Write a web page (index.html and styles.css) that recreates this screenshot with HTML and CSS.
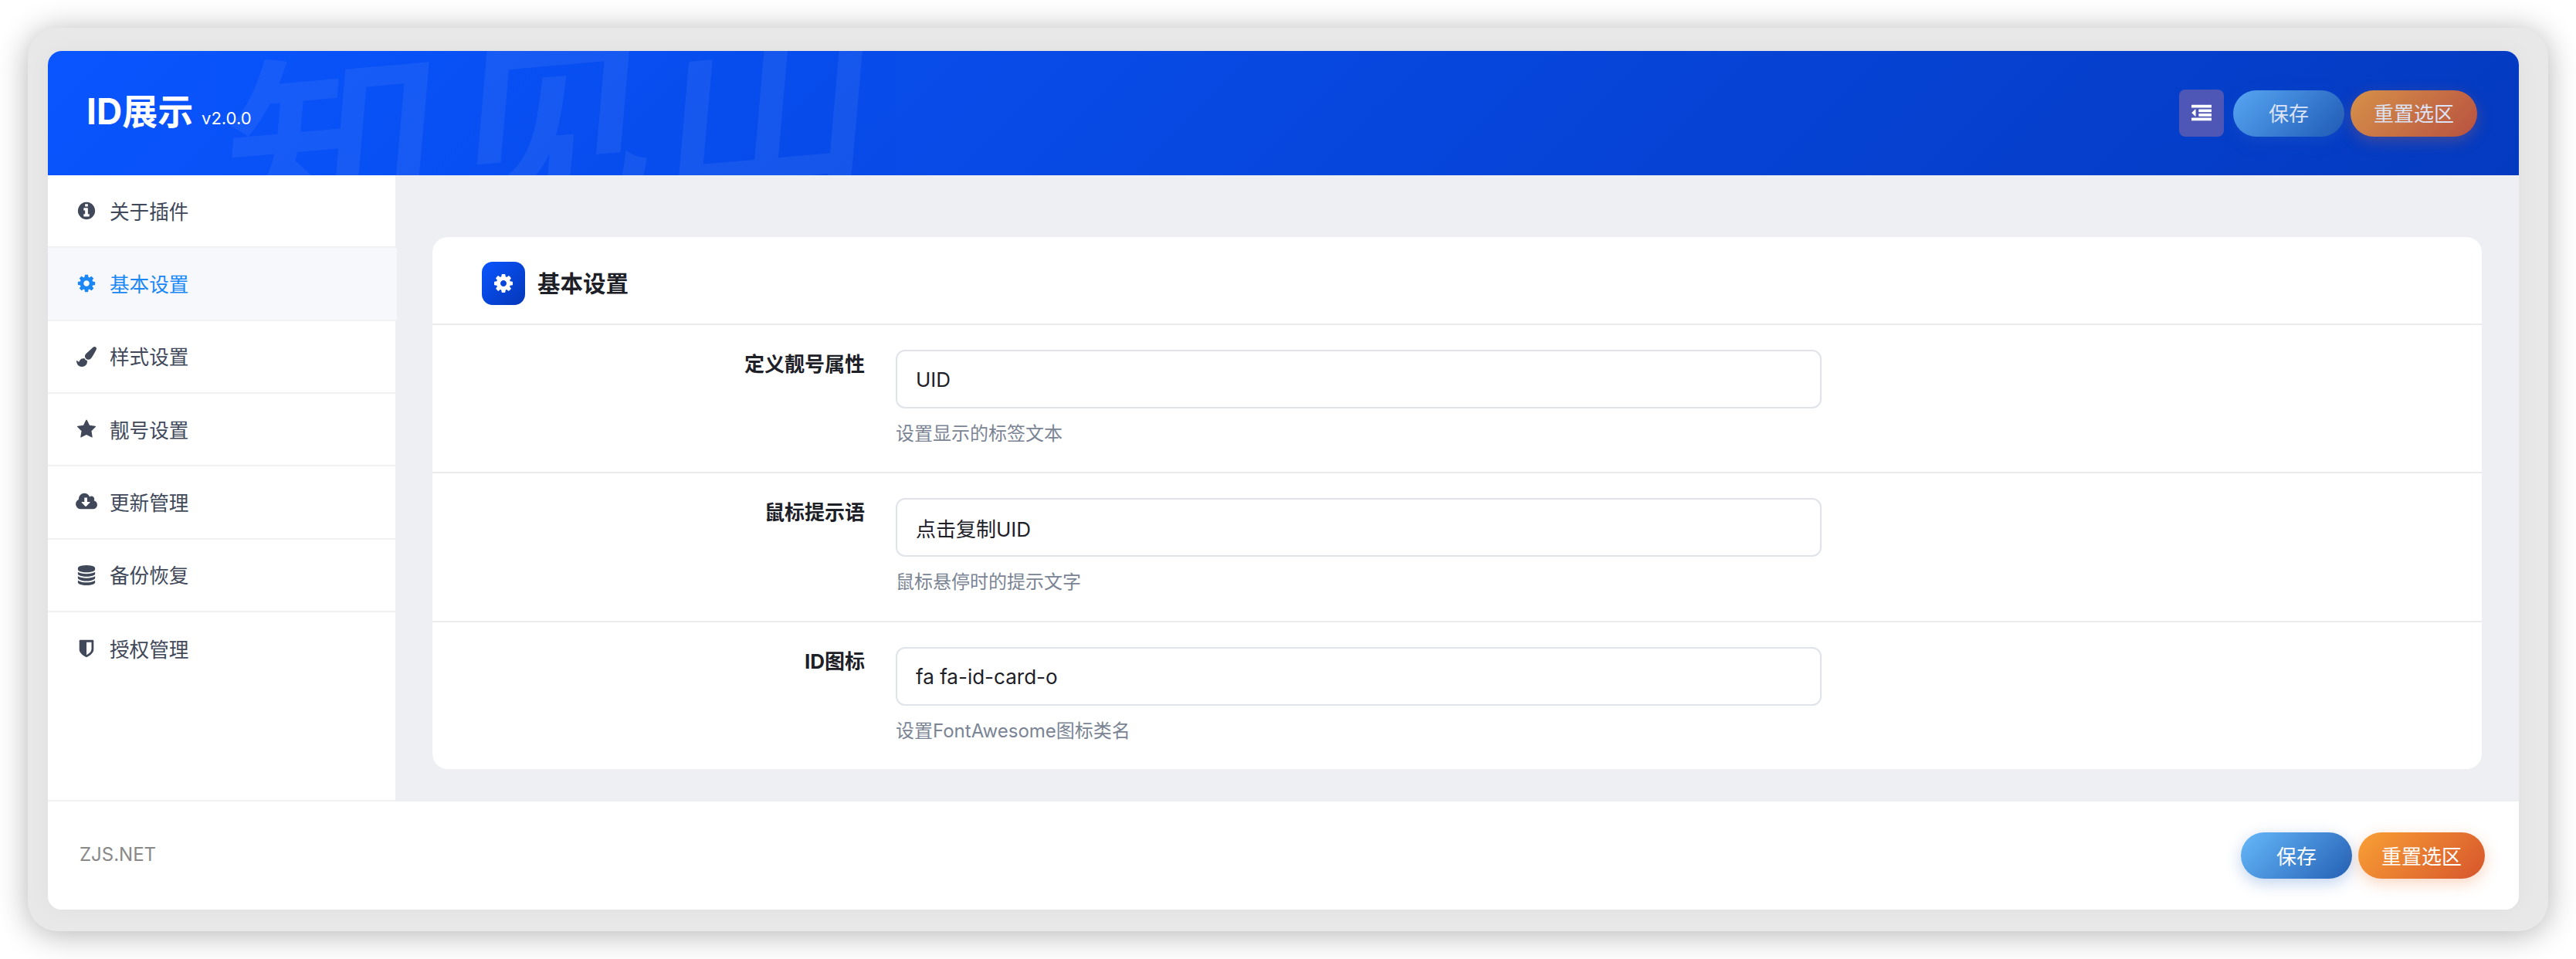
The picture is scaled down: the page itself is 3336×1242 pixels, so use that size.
FILE: index.html
```html
<!DOCTYPE html>
<html lang="zh-CN">
<head>
  <meta charset="UTF-8">
  <meta name="viewport" content="width=device-width, initial-scale=1.0">
  <title>ID展示</title>
  <link rel="stylesheet" href="styles.css">
</head>
<body>
  <div class="frame">
    <div class="panel">
      <header class="header">
        <div class="watermark">知见山</div>
        <h1 class="title">ID展示 <small class="version">v2.0.0</small></h1>
        <div class="header-actions">
          <button class="menu-btn" type="button">
            <svg class="menu-icon" viewBox="0 0 1792 1792"><path d="M384 544v576q0 13-9.5 22.5t-22.5 9.5q-14 0-23-9l-288-288q-9-9-9-23t9-23l288-288q9-9 23-9 13 0 22.5 9.5t9.5 22.5zm1408 768v192q0 13-9.5 22.5t-22.5 9.5h-1728q-13 0-22.5-9.5t-9.5-22.5v-192q0-13 9.5-22.5t22.5-9.5h1728q13 0 22.5 9.5t9.5 22.5zm0-384v192q0 13-9.5 22.5t-22.5 9.5h-1088q-13 0-22.5-9.5t-9.5-22.5v-192q0-13 9.5-22.5t22.5-9.5h1088q13 0 22.5 9.5t9.5 22.5zm0-384v192q0 13-9.5 22.5t-22.5 9.5h-1088q-13 0-22.5-9.5t-9.5-22.5v-192q0-13 9.5-22.5t22.5-9.5h1088q13 0 22.5 9.5t9.5 22.5zm0-384v192q0 13-9.5 22.5t-22.5 9.5h-1728q-13 0-22.5-9.5t-9.5-22.5v-192q0-13 9.5-22.5t22.5-9.5h1728q13 0 22.5 9.5t9.5 22.5z"/></svg>
          </button>
          <button class="btn btn-save btn-dim" type="button">保存</button>
          <button class="btn btn-reset btn-dim" type="button">重置选区</button>
        </div>
      </header>

      <div class="content">
        <nav class="sidebar">
          <a class="nav-item">
            <svg class="nav-icon" viewBox="0 0 1792 1792"><path d="M1152 1376v-160q0-14-9-23t-23-9h-96v-512q0-14-9-23t-23-9h-320q-14 0-23 9t-9 23v160q0 14 9 23t23 9h96v320h-96q-14 0-23 9t-9 23v160q0 14 9 23t23 9h448q14 0 23-9t9-23zm-128-896v-160q0-14-9-23t-23-9h-192q-14 0-23 9t-9 23v160q0 14 9 23t23 9h192q14 0 23-9t9-23zm640 416q0 209-103 385.5t-279.5 279.5-385.5 103-385.5-103-279.5-279.5-103-385.5 103-385.5 279.5-279.5 385.5-103 385.5 103 279.5 279.5 103 385.5z"/></svg>
            关于插件
          </a>
          <a class="nav-item active">
            <svg class="nav-icon" viewBox="0 0 1792 1792"><path d="M1152 896q0-106-75-181t-181-75-181 75-75 181 75 181 181 75 181-75 75-181zm512-109v222q0 12-8 23t-20 13l-185 28q-19 54-39 91 35 50 107 138 10 12 10 25t-9 23q-27 37-99 108t-94 71q-12 0-26-9l-138-108q-44 23-91 38-16 136-29 186-7 28-36 28h-222q-14 0-24.5-8.5t-11.5-21.5l-28-184q-49-16-90-37l-141 107q-10 9-25 9-14 0-25-11-126-114-165-168-7-10-7-23 0-12 8-23 15-21 51-66.5t54-70.5q-27-50-41-99l-183-27q-13-2-21-12.5t-8-23.5v-222q0-12 8-23t19-13l186-28q14-46 39-92-40-57-107-138-10-12-10-24 0-10 9-23 26-36 98.5-107.5t94.5-71.5q13 0 26 10l138 107q44-23 91-38 16-136 29-186 7-28 36-28h222q14 0 24.5 8.5t11.5 21.5l28 184q49 16 90 37l142-107q9-9 24-9 13 0 25 10 129 119 165 170 7 8 7 22 0 12-8 23-15 21-51 66.5t-54 70.5q26 50 41 98l183 28q13 2 21 12.5t8 23.5z"/></svg>
            基本设置
          </a>
          <a class="nav-item">
            <svg class="nav-icon" viewBox="0 0 1792 1792"><path d="M1615 0q70 0 122.5 46.5t52.5 116.5q0 63-45 151-332 629-465 752-97 91-218 91-126 0-216.5-92.5t-90.5-219.5q0-128 92-212l638-579q59-54 130-54zm-909 1034q39 76 106.5 130t150.5 76l1 71q4 213-129.5 347t-348.5 134q-123 0-218-46.5t-152.5-127.5-86.5-183-29-220q7 5 41 30t62 44.5 59 36.5 46 17q41 0 55-37 25-66 57.5-112.5t69.5-76 88-47.5 103-25.5 125-10.5z"/></svg>
            样式设置
          </a>
          <a class="nav-item">
            <svg class="nav-icon" viewBox="0 0 1792 1792"><path d="M1728 647q0 22-26 48l-363 354 86 500q1 7 1 20 0 21-10.5 35.5t-30.5 14.5q-19 0-40-12l-449-236-449 236q-22 12-40 12-21 0-31.5-14.5t-10.5-35.5q0-6 2-20l86-500-364-354q-25-27-25-48 0-37 56-46l502-73 225-455q19-41 49-41t49 41l225 455 502 73q56 9 56 46z"/></svg>
            靓号设置
          </a>
          <a class="nav-item">
            <svg class="nav-icon nav-icon-wide" viewBox="0 0 1920 1792"><path d="M1280 928q0-14-9-23t-23-9h-224v-352q0-13-9.5-22.5t-22.5-9.5h-192q-13 0-22.5 9.5t-9.5 22.5v352h-224q-13 0-22.5 9.5t-9.5 22.5q0 14 9 23l352 352q9 9 23 9t23-9l351-351q10-12 10-24zm640 224q0 159-112.5 271.5t-271.5 112.5h-1088q-185 0-316.5-131.5t-131.5-316.5q0-130 70-240t188-165q-2-30-2-43 0-212 150-362t362-150q156 0 285.5 87t188.5 231q71-62 166-62 106 0 181 75t75 181q0 76-41 138 130 31 213.5 135.5t83.5 238.5z"/></svg>
            更新管理
          </a>
          <a class="nav-item">
            <svg class="nav-icon" viewBox="0 0 1792 1792"><path d="M896 768q237 0 443-43t325-127v170q0 69-103 128t-280 93.5-385 34.5-385-34.5-280-93.5-103-128v-170q119 84 325 127t443 43zm0 768q237 0 443-43t325-127v170q0 69-103 128t-280 93.5-385 34.5-385-34.5-280-93.5-103-128v-170q119 84 325 127t443 43zm0-384q237 0 443-43t325-127v170q0 69-103 128t-280 93.5-385 34.5-385-34.5-280-93.5-103-128v-170q119 84 325 127t443 43zm0-1152q208 0 385 34.5t280 93.5 103 128v128q0 69-103 128t-280 93.5-385 34.5-385-34.5-280-93.5-103-128v-128q0-69 103-128t280-93.5 385-34.5z"/></svg>
            备份恢复
          </a>
          <a class="nav-item nav-item-last">
            <svg class="nav-icon" viewBox="0 0 1792 1792"><path d="M1344 960v-640h-448v1137q119-63 213-137 235-184 235-360zm192-768v768q0 86-33.5 170.5t-83 150-118 127.5-126.5 103-121 77.5-89.5 49.5-42.5 20q-12 6-26 6t-26-6q-16-7-42.5-20t-89.5-49.5-121-77.5-126.5-103-118-127.5-83-150-33.5-170.5v-768q0-26 19-45t45-19h1152q26 0 45 19t19 45z"/></svg>
            授权管理
          </a>
        </nav>

        <main class="main">
          <section class="card">
            <div class="card-header">
              <span class="card-icon">
                <svg class="card-icon-svg" viewBox="0 0 1792 1792"><path d="M1152 896q0-106-75-181t-181-75-181 75-75 181 75 181 181 75 181-75 75-181zm512-109v222q0 12-8 23t-20 13l-185 28q-19 54-39 91 35 50 107 138 10 12 10 25t-9 23q-27 37-99 108t-94 71q-12 0-26-9l-138-108q-44 23-91 38-16 136-29 186-7 28-36 28h-222q-14 0-24.5-8.5t-11.5-21.5l-28-184q-49-16-90-37l-141 107q-10 9-25 9-14 0-25-11-126-114-165-168-7-10-7-23 0-12 8-23 15-21 51-66.5t54-70.5q-27-50-41-99l-183-27q-13-2-21-12.5t-8-23.5v-222q0-12 8-23t19-13l186-28q14-46 39-92-40-57-107-138-10-12-10-24 0-10 9-23 26-36 98.5-107.5t94.5-71.5q13 0 26 10l138 107q44-23 91-38 16-136 29-186 7-28 36-28h222q14 0 24.5 8.5t11.5 21.5l28 184q49 16 90 37l142-107q9-9 24-9 13 0 25 10 129 119 165 170 7 8 7 22 0 12-8 23-15 21-51 66.5t-54 70.5q26 50 41 98l183 28q13 2 21 12.5t8 23.5z"/></svg>
              </span>
              <h2 class="card-title">基本设置</h2>
            </div>

            <div class="form-row">
              <label class="form-label">定义靓号属性</label>
              <div class="form-field">
                <input class="form-input" type="text" value="UID">
                <div class="form-help">设置显示的标签文本</div>
              </div>
            </div>

            <div class="form-row form-row-mid">
              <label class="form-label">鼠标提示语</label>
              <div class="form-field">
                <input class="form-input" type="text" value="点击复制UID">
                <div class="form-help">鼠标悬停时的提示文字</div>
              </div>
            </div>

            <div class="form-row form-row-last">
              <label class="form-label">ID图标</label>
              <div class="form-field">
                <input class="form-input" type="text" value="fa fa-id-card-o">
                <div class="form-help">设置FontAwesome图标类名</div>
              </div>
            </div>
          </section>
        </main>
      </div>

      <footer class="footer">
        <span class="copyright">ZJS.NET</span>
        <div class="footer-actions">
          <button class="btn btn-save" type="button">保存</button>
          <button class="btn btn-reset" type="button">重置选区</button>
        </div>
      </footer>
    </div>
  </div>
</body>
</html>
```

FILE: styles.css
```css
* {
  box-sizing: border-box;
}

html, body {
  height: 100%;
}

body {
  margin: 0;
  padding: 36px;
  background-color: #fff;
  font-family: Inter, "Noto Sans CJK SC", sans-serif;
  font-size: 26px;
  color: #1d2027;
  overflow: hidden;
}

.frame {
  height: 100%;
  padding: 30px 38px 28px 26px;
  border-radius: 38px;
  background-color: #e8e8e9;
  box-shadow: 0 4px 40px rgba(0, 0, 0, 0.3);
}

.panel {
  display: flex;
  flex-direction: column;
  height: 100%;
  border-radius: 18px;
  background-color: #fff;
  box-shadow: 0 0 30px rgba(0, 0, 0, 0.04);
  overflow: hidden;
}

/* header */
.header {
  position: relative;
  display: flex;
  align-items: center;
  justify-content: space-between;
  flex: none;
  height: 161px;
  padding: 0 54px 0 50px;
  background: linear-gradient(135deg, #0a55ff, #043ac0);
  color: #fff;
  overflow: hidden;
}

.watermark {
  position: absolute;
  left: 285px;
  top: -46px;
  font-size: 240px;
  font-weight: 400;
  line-height: 1.2;
  letter-spacing: 8px;
  white-space: nowrap;
  color: #fff;
  -webkit-text-stroke: 8px #fff;
  opacity: 0.06;
  transform: rotate(-5deg) skewX(-10deg) scaleX(1.15);
}

.title {
  position: relative;
  margin: 0 0 12px;
  font-size: 46px;
  font-weight: 700;
}

.version {
  font-size: 22px;
  font-weight: 400;
}

.header-actions,
.footer-actions {
  position: relative;
  display: flex;
  align-items: center;
  gap: 8px;
}

.menu-btn {
  display: flex;
  align-items: center;
  justify-content: center;
  width: 58px;
  height: 61px;
  margin-right: 4px;
  padding: 0;
  border: none;
  border-radius: 8px;
  background-color: #4e56b6;
}

.menu-icon {
  width: 26px;
  height: 26px;
  fill: #fff;
}

.btn {
  min-width: 144px;
  height: 60px;
  padding: 0 30px 2px;
  border: none;
  border-radius: 30px;
  font-family: inherit;
  font-size: 26px;
  color: #fff;
}

.btn-save {
  background: linear-gradient(135deg, #66b8fa, #2460b4);
  box-shadow: 0 6px 20px rgba(48, 110, 200, 0.3);
}

.btn-reset {
  background: linear-gradient(135deg, #f9a035, #d6552c);
  box-shadow: 0 6px 20px rgba(240, 120, 50, 0.3);
}

.btn-dim {
  opacity: 0.86;
}

/* sidebar */
.content {
  display: flex;
  flex: 1;
  min-height: 0;
}

.sidebar {
  flex: none;
  width: 450px;
  border-bottom: 2px solid #f1f1f2;
  background-color: #fff;
}

.nav-item {
  display: flex;
  align-items: center;
  height: 94.33px;
  padding: 0 0 2px 35px;
  border-bottom: 2px solid #f1f1f2;
  font-size: 25.6px;
  color: #404859;
}

.nav-item.active {
  margin-right: -2px;
  position: relative;
  background-color: #f7f8fc;
  color: #1a87f5;
}

.nav-item-last {
  border-bottom: none;
}

.nav-icon {
  flex: none;
  width: 26px;
  height: 26px;
  margin: 2px 17px 0 2px;
  fill: currentColor;
}

.nav-icon-wide {
  width: 28px;
  margin: 2px 16px 0 1px;
}

/* main */
.main {
  flex: 1;
  min-width: 0;
  padding: 80px 48px 42px;
  background-color: #edeff3;
}

.card {
  height: 100%;
  border-radius: 20px;
  background-color: #fff;
}

.card-header {
  display: flex;
  align-items: center;
  gap: 16px;
  height: 114px;
  padding: 8px 0 0 64px;
  border-bottom: 2px solid #ebebed;
}

.card-icon {
  display: flex;
  align-items: center;
  justify-content: center;
  width: 56px;
  height: 56px;
  border-radius: 14px;
  background: linear-gradient(135deg, #0a55ff, #0437b8);
}

.card-icon-svg {
  width: 28px;
  height: 28px;
  fill: #fff;
}

.card-title {
  margin: 0 0 4px;
  font-size: 29.5px;
  font-weight: 700;
}

.form-row {
  display: flex;
  gap: 40px;
  height: 192px;
  padding-top: 32px;
  border-bottom: 2px solid #ebebed;
}

.form-row-mid {
  height: 193px;
}

.form-row-last {
  height: 190px;
  border-bottom: none;
}

.form-label {
  flex: none;
  width: 560px;
  padding-top: 1px;
  font-size: 26px;
  font-weight: 700;
  line-height: 36px;
  text-align: right;
}

.form-input {
  display: block;
  width: 1199px;
  height: 76px;
  padding: 0 24px;
  border: 2px solid #e0e3ea;
  border-radius: 12px;
  outline: none;
  background-color: #fff;
  font-family: inherit;
  font-size: 26px;
  color: #1d2027;
}

.form-help {
  margin-top: 15px;
  font-size: 24px;
  line-height: 36px;
  color: #7a8494;
}

/* footer */
.footer {
  display: flex;
  align-items: center;
  justify-content: space-between;
  flex: none;
  height: 140px;
  padding: 0 44px 0 41px;
  background-color: #fff;
}

.copyright {
  padding-bottom: 4px;
  font-size: 24px;
  color: #888;
}
```
